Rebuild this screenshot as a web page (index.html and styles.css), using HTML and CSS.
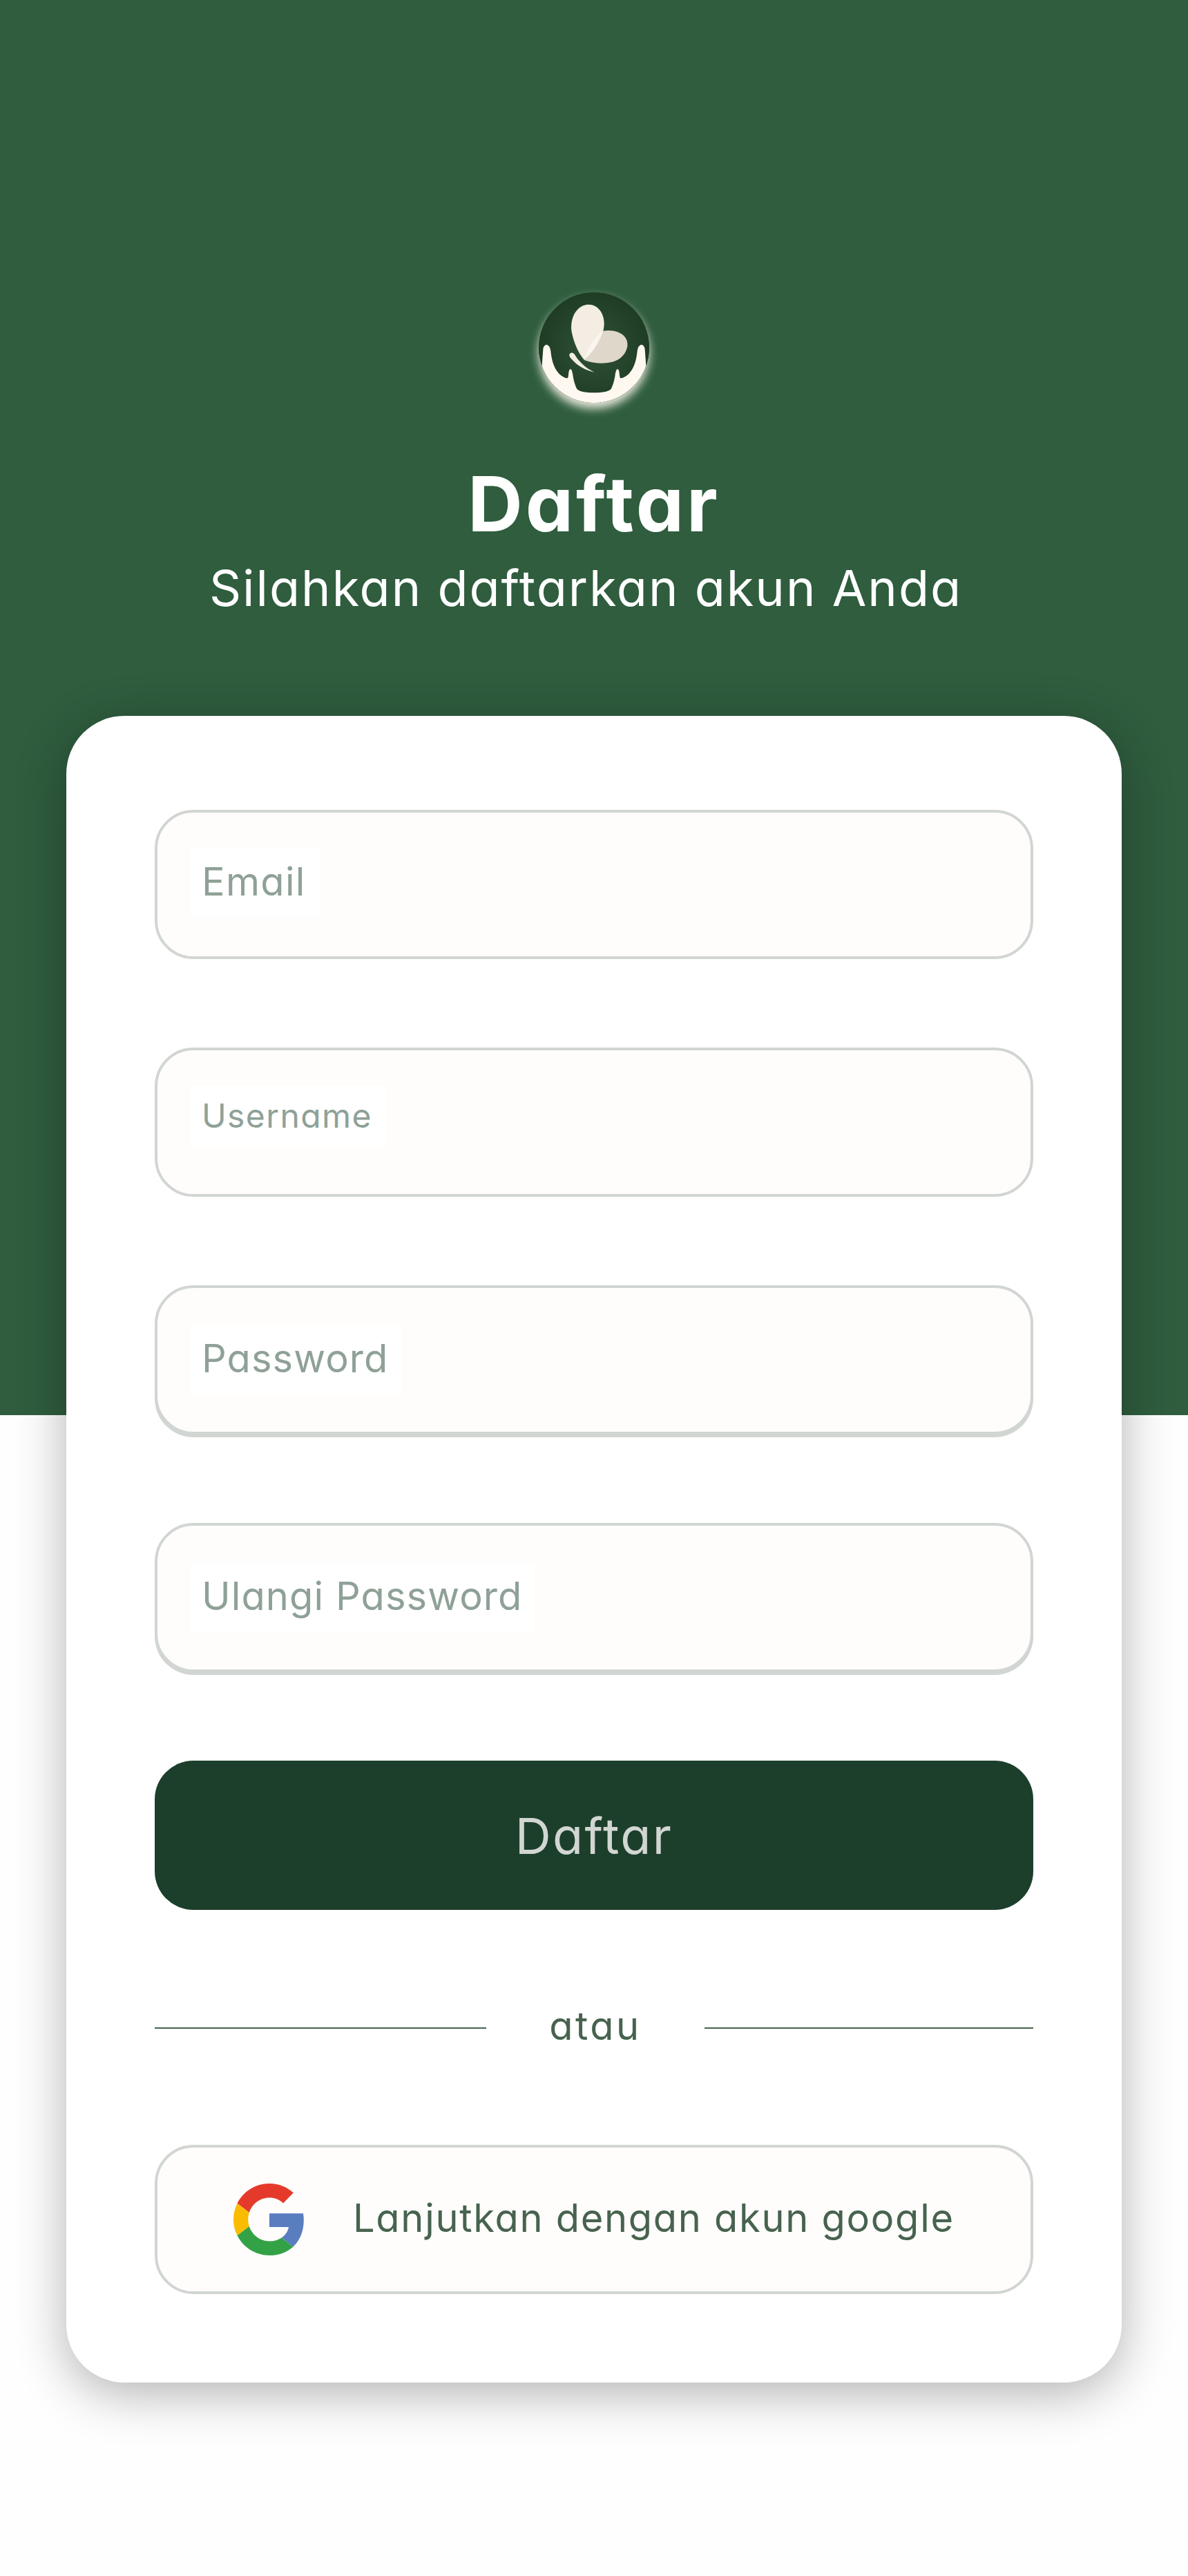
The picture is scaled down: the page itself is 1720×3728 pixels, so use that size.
FILE: index.html
```html
<!DOCTYPE html>
<html lang="id">
<head>
<meta charset="utf-8">
<title>Daftar</title>
<link rel="stylesheet" href="styles.css">
</head>
<body>
<main class="page">
  <header class="hero">
    <div class="logo">
      <svg class="logo-art" viewBox="180 130 480 480" aria-hidden="true">
        <defs>
          <radialGradient id="disc" cx="50%" cy="50%" r="50%">
            <stop offset="0" stop-color="#2f5237"/>
            <stop offset="1" stop-color="#1f3c25"/>
          </radialGradient>
          <clipPath id="discClip"><circle cx="420" cy="370" r="240"/></clipPath>
        </defs>
        <circle cx="420" cy="370" r="240" fill="url(#disc)"/>
        <g clip-path="url(#discClip)">
          <path fill="#fff8f0" d="M199 378C200 364 208 357 215 358C224 360 229 368 232 385C236 425 246 460 268 483C280 495 294 503 306 503C311 492 308 470 316 464C323 462 325 472 328 488C331 512 338 535 346 550C356 560 380 566 420 566C460 566 484 560 494 550C502 535 509 512 512 488C515 472 517 462 524 464C532 470 529 492 534 503C546 503 560 495 572 483C594 460 604 425 608 385C611 368 616 360 625 358C632 357 640 364 641 378L660 640L180 640Z"/>
        </g>
        <path fill="#dfd7ca" d="M460 298C495 292 535 300 555 325C575 352 565 390 535 415C505 440 445 442 410 434C397 431 386 428 378 424C405 395 440 350 460 298Z"/>
        <path fill="#f3ede4" d="M378 424C352 395 330 345 322 295C316 240 345 185 395 183C440 183 465 225 464 270C463 282 462 290 460 298C440 350 405 395 378 424Z"/>
        <path fill="#faf6ef" d="M378 424C385 385 420 325 460 298C445 345 412 393 378 424Z"/>
        <path fill="#f3ede4" d="M313 403C313 391 328 388 336 400C350 425 380 458 422 477C385 470 348 450 324 422C317 414 313 409 313 403Z"/>
      </svg>
    </div>
    <h1 class="title">Daftar</h1>
    <p class="subtitle">Silahkan daftarkan akun Anda</p>
  </header>

  <section class="card">
    <form class="form">
      <div class="field"><span class="hint hint-email">Email</span></div>
      <div class="field"><span class="hint hint-small">Username</span></div>
      <div class="field field-raised"><span class="hint">Password</span></div>
      <div class="field field-raised"><span class="hint">Ulangi Password</span></div>
      <button class="submit" type="button">Daftar</button>
      <div class="divider"><span class="rule rule-left"></span><span class="divider-text">atau</span><span class="rule"></span></div>
      <button class="google" type="button">
        <svg class="google-icon" viewBox="0 0 48 48" aria-hidden="true">
          <path fill="#e53a2b" d="M24 9.5c3.54 0 6.71 1.22 9.21 3.6l6.85-6.85C35.9 2.38 30.47 0 24 0 14.62 0 6.51 5.38 2.56 13.22l7.98 6.19C12.43 13.72 17.74 9.5 24 9.5z"/>
          <path fill="#5a7dbf" d="M46.98 24.55c0-1.57-.15-3.09-.38-4.55H24v9.02h12.94c-.58 2.96-2.26 5.48-4.78 7.18l7.73 6c4.51-4.18 7.09-10.36 7.09-17.65z"/>
          <path fill="#f9bc00" d="M10.53 28.59c-.48-1.45-.76-2.99-.76-4.59s.27-3.14.76-4.59l-7.98-6.19C.92 16.46 0 20.12 0 24c0 3.88.92 7.54 2.56 10.78l7.97-6.19z"/>
          <path fill="#33a247" d="M24 48c6.48 0 11.93-2.13 15.89-5.81l-7.73-6c-2.15 1.45-4.92 2.3-8.16 2.3-6.26 0-11.57-4.22-13.47-9.91l-7.98 6.19C6.51 42.62 14.62 48 24 48z"/>
        </svg>
        <span class="google-text">Lanjutkan dengan akun google</span>
      </button>
    </form>
  </section>
</main>
</body>
</html>
```
FILE: styles.css
```css
* { box-sizing: border-box; }
html, body { margin: 0; padding: 0; }
body {
  background: #fefefe;
  font-family: "Inter", "Noto Sans", "Liberation Sans", sans-serif;
  font-feature-settings: "cv11" 1;
}
.page {
  width: 1720px;
  height: 3728px;
  padding: 423px 96px 0;
  background: linear-gradient(#2f5d3e 2048px, #fefefe 2048px);
}
.hero { display: flex; flex-direction: column; align-items: center; color: #fff; height: 613px; }
.logo {
  width: 160px;
  height: 160px;
  border-radius: 50%;
  box-shadow: 0 8px 14px rgba(255, 250, 240, 0.9);
}
.logo-art { display: block; width: 160px; height: 160px; }
.title {
  margin: 81px 0 12px;
  font-size: 110px;
  line-height: 130px;
  font-weight: 700;
  letter-spacing: 4px;
}
.subtitle {
  margin: 0 24px 0 0;
  font-size: 72px;
  line-height: 90px;
  font-weight: 400;
  letter-spacing: 2px;
}
.card {
  height: 2412px;
  padding: 136px 128px 128px;
  background: #fff;
  border-radius: 84px;
  box-shadow: 0 16px 72px rgba(0, 0, 0, 0.3);
}
.form { display: flex; flex-direction: column; gap: 128px; }
.field {
  display: flex;
  align-items: center;
  height: 216px;
  padding-left: 48px;
  background: #fefdfb;
  border: 4px solid #d1d6d2;
  border-radius: 56px;
}
.field-raised { box-shadow: 0 4px 0 #d1d6d2; }
.hint {
  padding: 0 18px 0 16px;
  height: 100px;
  font-size: 56px;
  line-height: 96px;
  letter-spacing: 1.1px;
  color: #8fa197;
  background: #fff;
}
.hint-email { margin-bottom: 4px; padding-right: 20px; letter-spacing: 1.3px; }
.hint-small {
  height: 88px;
  margin-bottom: 16px;
  padding-right: 20px;
  font-size: 48px;
  line-height: 86px;
  letter-spacing: 1.4px;
}
.submit {
  height: 216px;
  border: 0;
  border-radius: 56px;
  background: #1c3f2b;
  color: #d2d6d2;
  font: inherit;
  font-feature-settings: inherit;
  font-size: 72px;
  letter-spacing: 2.4px;
}
.divider { display: flex; align-items: center; height: 84px; }
.rule { flex: 1; height: 2px; margin-top: 2px; background: #47634f; }
.rule-left { flex: none; width: 480px; }
.divider-text { width: 316px; margin-bottom: 4px; text-align: center; font-size: 56px; letter-spacing: 3.5px; color: #47634f; }
.google {
  display: flex;
  align-items: center;
  gap: 69px;
  height: 216px;
  padding: 0 0 0 110px;
  background: #fefdfb;
  border: 4px solid #d1d6d2;
  border-radius: 56px;
  font: inherit;
  font-feature-settings: inherit;
  font-size: 56px;
  letter-spacing: 1.7px;
  color: #47634f;
}
.google-icon { width: 104px; height: 104px; flex: none; }
.google-text { margin-bottom: 4px; }
```
